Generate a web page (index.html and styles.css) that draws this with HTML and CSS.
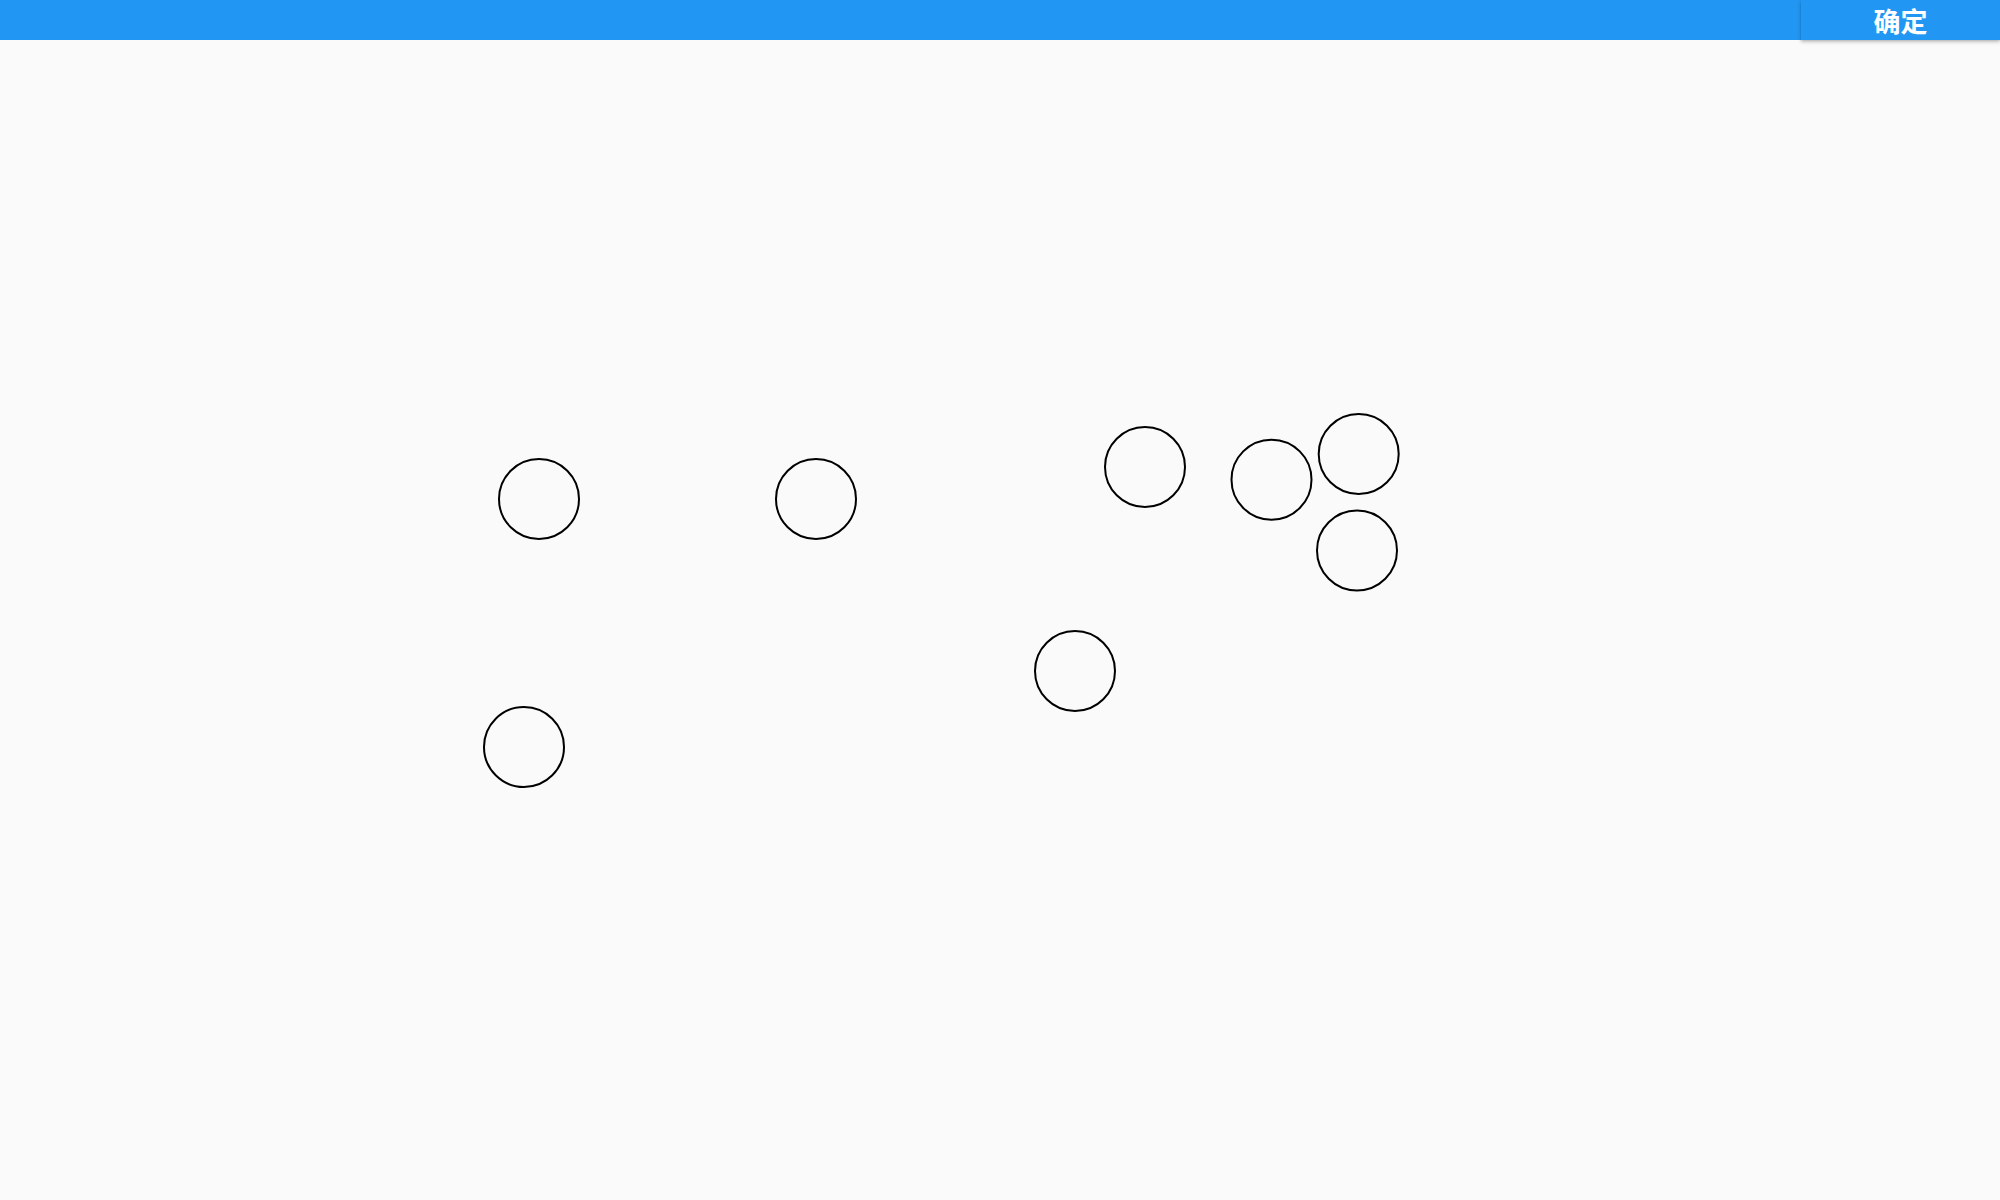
FILE: index.html
```html
<!DOCTYPE html>
<html lang="zh">
<head>
<meta charset="utf-8">
<link rel="stylesheet" href="styles.css">
</head>
<body>
<div class="app">
  <header class="bar">
    <button class="confirm"><span class="label">确定</span></button>
  </header>
  <main class="canvas">
    <svg class="board" width="2000" height="1160" viewBox="0 0 2000 1160">
      <g fill="none" stroke="#000" stroke-width="2">
        <circle cx="539" cy="459" r="40"/>
        <circle cx="816" cy="459" r="40"/>
        <circle cx="1145" cy="427" r="40"/>
        <circle cx="1271.5" cy="439.7" r="40"/>
        <circle cx="1358.7" cy="414" r="40"/>
        <circle cx="1357" cy="510.5" r="40"/>
        <circle cx="1075" cy="631" r="40"/>
        <circle cx="524" cy="707" r="40"/>
      </g>
    </svg>
  </main>
</div>
</body>
</html>
```
FILE: styles.css
```css
html, body {
  margin: 0;
  padding: 0;
  width: 2000px;
  height: 1200px;
  overflow: hidden;
  background: #fafafa;
  font-family: "Roboto", "Noto Sans CJK SC", sans-serif;
}
.app {
  display: flex;
  flex-direction: column;
  width: 2000px;
  height: 1200px;
}
.bar {
  height: 40px;
  flex: 0 0 40px;
  background: #2196f3;
  display: flex;
  justify-content: flex-end;
  position: relative;
  z-index: 1;
}
.confirm {
  width: 199px;
  height: 40px;
  border: none;
  margin: 0;
  padding: 2px 0 0 0;
  background: #2196f3;
  color: #fff;
  font-family: "Noto Sans CJK SC", sans-serif;
  font-weight: 700;
  font-size: 27px;
  line-height: 38px;
  box-shadow: 0 2px 4px rgba(0,0,0,0.2), 0 1px 2px rgba(0,0,0,0.12);
  cursor: pointer;
}
.label {
  display: block;
}
.canvas {
  flex: 1;
  position: relative;
}
.board {
  display: block;
}
```
